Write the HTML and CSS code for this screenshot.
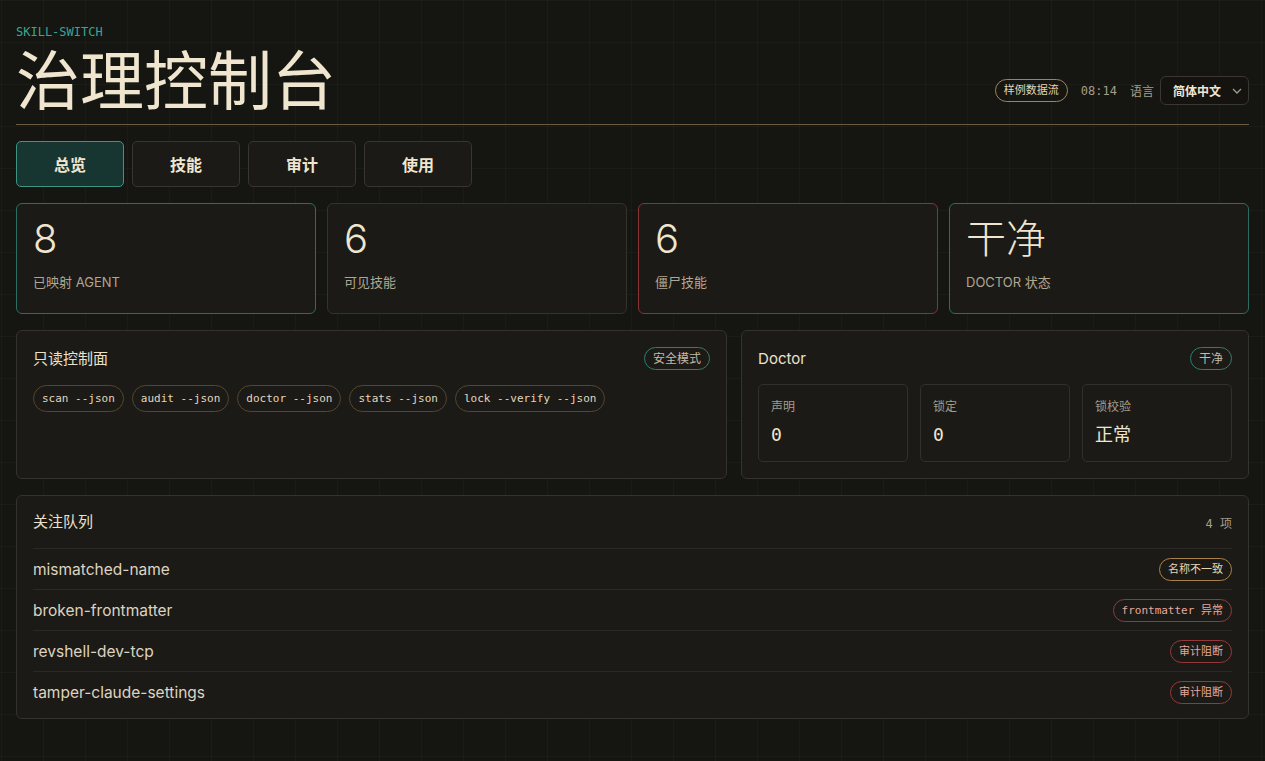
FILE: index.html
```html
<!DOCTYPE html>
<html lang="zh-CN">
<head>
    <meta charset="UTF-8">
    <meta name="viewport" content="width=device-width, initial-scale=1.0">
    <title>治理控制台 - skill-switch</title>
    <link rel="stylesheet" href="styles.css">
</head>
<body>
    <div class="page">
        <header class="top">
            <div class="brand">
                <div class="eyebrow">SKILL-SWITCH</div>
                <h1>治理控制台</h1>
            </div>
            <div class="meta">
                <span class="badge amber">样例数据流</span>
                <span class="clock">08:14</span>
                <span class="lang-label">语言</span>
                <div class="select">
                    <span>简体中文</span>
                    <svg width="10" height="6" viewBox="0 0 10 6"><path d="M1 1l4 4 4-4" fill="none" stroke="#a49c8a" stroke-width="1.3"/></svg>
                </div>
            </div>
        </header>

        <nav class="tabs">
            <button class="tab active">总览</button>
            <button class="tab">技能</button>
            <button class="tab">审计</button>
            <button class="tab">使用</button>
        </nav>

        <section class="stats">
            <div class="stat teal">
                <div class="num">8</div>
                <div class="label">已映射 AGENT</div>
            </div>
            <div class="stat">
                <div class="num">6</div>
                <div class="label">可见技能</div>
            </div>
            <div class="stat red">
                <div class="num">6</div>
                <div class="label">僵尸技能</div>
            </div>
            <div class="stat teal">
                <div class="num">干净</div>
                <div class="label">DOCTOR 状态</div>
            </div>
        </section>

        <section class="panels">
            <div class="panel">
                <div class="panel-head">
                    <h2>只读控制面</h2>
                    <span class="badge teal">安全模式</span>
                </div>
                <div class="chips">
                    <span class="chip">scan --json</span>
                    <span class="chip">audit --json</span>
                    <span class="chip">doctor --json</span>
                    <span class="chip">stats --json</span>
                    <span class="chip">lock --verify --json</span>
                </div>
            </div>
            <div class="panel">
                <div class="panel-head">
                    <h2>Doctor</h2>
                    <span class="badge teal">干净</span>
                </div>
                <div class="doc-grid">
                    <div class="doc-box">
                        <div class="doc-label">声明</div>
                        <div class="doc-val mono">0</div>
                    </div>
                    <div class="doc-box">
                        <div class="doc-label">锁定</div>
                        <div class="doc-val mono">0</div>
                    </div>
                    <div class="doc-box">
                        <div class="doc-label">锁校验</div>
                        <div class="doc-val">正常</div>
                    </div>
                </div>
            </div>
        </section>

        <section class="panel queue">
            <div class="queue-head">
                <h2>关注队列</h2>
                <span class="count">4 项</span>
            </div>
            <div class="row">
                <span class="name">mismatched-name</span>
                <span class="tag amber">名称不一致</span>
            </div>
            <div class="row">
                <span class="name">broken-frontmatter</span>
                <span class="tag red"><span class="mono">frontmatter 异常</span></span>
            </div>
            <div class="row">
                <span class="name">revshell-dev-tcp</span>
                <span class="tag red">审计阻断</span>
            </div>
            <div class="row">
                <span class="name">tamper-claude-settings</span>
                <span class="tag red">审计阻断</span>
            </div>
        </section>
    </div>
</body>
</html>
```

FILE: styles.css
```css
body {
    margin: 0;
    min-height: 761px;
    background-color: #151511;
    background-image:
        linear-gradient(to right, rgba(255, 255, 255, 0.025) 1px, transparent 1px),
        linear-gradient(to bottom, rgba(255, 255, 255, 0.025) 1px, transparent 1px);
    background-size: 42px 42px;
    background-position: 1px 0;
    color: #efe6d2;
    font-family: Inter, "Noto Sans CJK SC", sans-serif;
}
.page {
    padding: 24px 16px 0;
}
.mono {
    font-family: "DejaVu Sans Mono", "Noto Sans CJK SC", monospace;
}

/* header */
.top {
    display: flex;
    justify-content: space-between;
    align-items: flex-end;
    padding-bottom: 14px;
    border-bottom: 1px solid #6e5b3f;
}
.eyebrow {
    font-family: "DejaVu Sans Mono", monospace;
    font-size: 12px;
    line-height: 16px;
    margin-bottom: 2px;
    color: #3aa595;
}
h1 {
    margin: 0;
    font-family: "Noto Sans CJK SC", sans-serif;
    font-weight: 400;
    font-size: 64px;
    line-height: 68px;
    color: #f0e6d0;
}
.meta {
    display: flex;
    align-items: center;
    gap: 13px;
    margin-bottom: 5px;
}
.clock {
    font-family: "DejaVu Sans Mono", monospace;
    font-size: 12px;
    color: #a59d8a;
}
.lang-label {
    font-size: 12px;
    color: #a59d8a;
    margin-right: -7px;
}
.select {
    display: flex;
    align-items: center;
    justify-content: space-between;
    box-sizing: border-box;
    width: 89px;
    height: 29px;
    padding: 0 6px 0 12px;
    background: #141310;
    border: 1px solid #3a3731;
    border-radius: 6px;
    font-size: 12px;
    font-weight: 700;
    color: #f0e6d0;
}

/* badges */
.badge, .tag {
    display: inline-block;
    height: 23px;
    line-height: 21px;
    box-sizing: border-box;
    padding: 0 8px;
    border: 1px solid;
    border-radius: 12px;
    font-size: 12px;
    white-space: nowrap;
}
.badge.amber {
    font-size: 11px;
    margin-left: 2px;
    border-color: #a9824a;
    color: #e6d6b0;
}
.badge.teal {
    border-color: #2f7d6f;
    color: #c2bba9;
}
.tag {
    font-size: 11px;
}
.tag .mono {
    font-size: 11px;
}
.tag.amber {
    border-color: #a9824a;
    color: #e6d6b0;
}
.tag.red {
    border-color: #95383a;
    color: #e9a89d;
}

/* tabs */
.tabs {
    display: flex;
    gap: 8px;
    margin-top: 16px;
}
.tab {
    width: 108px;
    height: 46px;
    background: #1c1a16;
    border: 1px solid #393630;
    border-radius: 5px;
    color: #f0e6d0;
    font-family: "Noto Sans CJK SC", sans-serif;
    font-size: 16px;
    font-weight: 600;
    cursor: pointer;
}
.tab.active {
    background: #183631;
    border-color: #3c9583;
}

/* stat cards */
.stats {
    display: grid;
    grid-template-columns: repeat(4, 1fr);
    gap: 11px;
    margin-top: 16px;
}
.stat {
    background: #1c1a16;
    border: 1px solid #35322c;
    border-radius: 6px;
    padding: 15px 16px 22px;
}
.stat.teal {
    border-color: #2c6d61;
}
.stat.red {
    border-color: #8a3236;
}
.num {
    font-size: 40px;
    line-height: 40px;
    font-weight: 300;
    color: #f0e6d0;
}
.label {
    margin-top: 14px;
    font-size: 13px;
    line-height: 18px;
    color: #b0a792;
}

/* panels */
.panels {
    display: grid;
    grid-template-columns: 7fr 5fr;
    gap: 14px;
    margin-top: 16px;
}
.panel {
    background: #1c1a16;
    border: 1px solid #35322c;
    border-radius: 6px;
    padding: 16px;
}
.panel-head {
    display: flex;
    justify-content: space-between;
    align-items: center;
}
h2 {
    margin: 0;
    font-size: 15px;
    font-weight: 400;
    line-height: 20px;
    color: #ece2cc;
}
.chips {
    display: flex;
    flex-wrap: wrap;
    gap: 8px;
    margin-top: 15px;
}
.chip {
    height: 27px;
    line-height: 25px;
    box-sizing: border-box;
    padding: 0 8px;
    border: 1px solid #56462e;
    border-radius: 14px;
    font-family: "DejaVu Sans Mono", monospace;
    font-size: 11px;
    color: #e2d7bf;
}
.doc-grid {
    display: grid;
    grid-template-columns: repeat(3, 1fr);
    gap: 12px;
    margin-top: 14px;
}
.doc-box {
    border: 1px solid #33302a;
    border-radius: 5px;
    padding: 14px 12px;
}
.doc-label {
    font-size: 12px;
    line-height: 16px;
    color: #a59d8a;
}
.doc-val {
    margin-top: 8px;
    font-size: 18px;
    line-height: 24px;
    color: #f0e6d0;
}

/* queue */
.queue {
    margin-top: 16px;
    padding-bottom: 6px;
}
.queue-head {
    display: flex;
    justify-content: space-between;
    align-items: center;
    margin-bottom: 16px;
}
.count {
    font-family: "DejaVu Sans Mono", "Noto Sans CJK SC", monospace;
    font-size: 12px;
    color: #a59d8a;
}
.row {
    display: flex;
    justify-content: space-between;
    align-items: center;
    height: 40px;
    border-top: 1px solid #2b2924;
}
.name {
    font-size: 15.5px;
    color: #ddd4c0;
}
```
